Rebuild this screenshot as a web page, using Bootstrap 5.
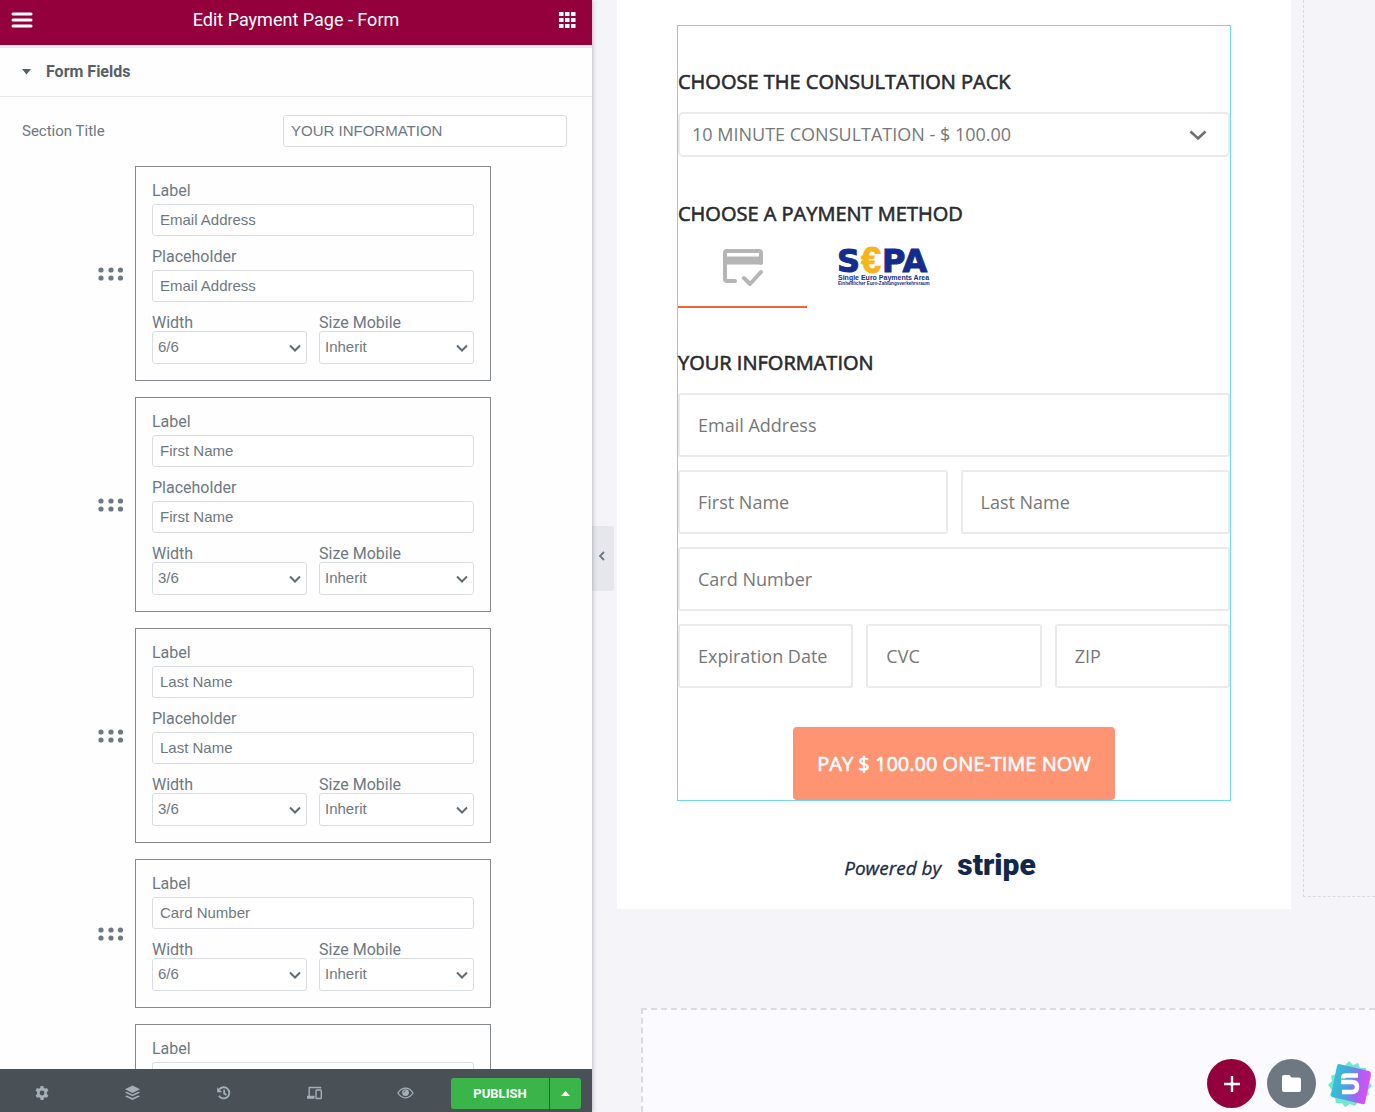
<!DOCTYPE html>
<html lang="en">
<head>
<meta charset="utf-8">
<meta name="viewport" content="width=device-width, initial-scale=1">
<title>Edit Payment Page - Form</title>
<link href="https://cdn.jsdelivr.net/npm/bootstrap@5.3.0/dist/css/bootstrap.min.css" rel="stylesheet">
<style>
  body { font-family: Roboto, "Liberation Sans", sans-serif; background: #f4f4f9; color: #6d7882; }

  /* Editor panel */
  .panel { flex: 0 0 592px; background: #fefefe; box-shadow: 1px 0 4px rgba(60, 60, 80, .3); z-index: 2; }
  .panel-top { height: 48px; background: #93003c; border-bottom: 3px solid #e6e9ec; padding: 0 16px 5px 11px; }
  .panel-top h1 { font-size: 18px; line-height: 24px; font-weight: 400; color: #fff; }
  .icon-btn { border: 0; background: none; padding: 0; line-height: 0; color: inherit; }
  .section-toggle { height: 49px; border: 0; border-bottom: 1px solid #e6e9ec; background: none; padding: 0 22px; gap: 15px; font-size: 16px; font-weight: 700; color: #556068; }
  .panel-body { flex: 1 1 0; min-height: 0; }
  .title-row { padding: 18px 25px 19px 22px; font-size: 15px; }
  .title-row .panel-input { width: 284px; }
  .panel-input, .panel-select {
    font: 15px/20px "Liberation Sans", sans-serif; color: #6d7882; background-color: #fff;
    border: 1px solid #d9dde2; border-radius: 3px;
  }
  .panel-input { height: 32px; padding: 0 7px 1px; }
  .panel-select {
    height: 33px; padding: 0 24px 1px 5px;
    background-image: url("data:image/svg+xml,%3Csvg xmlns='http://www.w3.org/2000/svg' viewBox='0 0 12 12'%3E%3Cpath d='M1 3.500l5 5 5-5' fill='none' stroke='%23606a72' stroke-width='2'/%3E%3C/svg%3E");
    background-position: right 5px center; background-size: 12px 12px;
  }
  .field-list { gap: 16px; padding: 0 101px 0 98px; }
  .field-row { gap: 11px; }
  .grip { flex: 0 0 26px; cursor: move; }
  .field-box { border: 1px solid #85888c; padding: 15px 16px 16px; font-size: 16px; line-height: 18px; }
  .field-box-open { min-height: 216px; }
  .field-box label { display: block; }
  .field-box .panel-input { margin: 4px 0 12px; }
  .half-row { gap: 12px; line-height: 17px; }
  .panel-bottom { height: 43px; background: #495157; color: #a4afb7; padding: 0 11px 0 0; }
  .tool-list { padding: 4px 37px 0 34px; }
  .publish-group { margin-top: 6px; }
  .publish { height: 31px; background: #39b54a; color: #fff; border-radius: 3px; border: 0; font-size: 13px; font-weight: 700; }
  .publish:hover { background: #2f9c3f; color: #fff; }
  .publish-main { width: 98px; padding: 0; }
  .publish-more { width: 31px; padding: 0; margin-left: 1px !important; line-height: 0; }

  /* Page preview */
  .preview { font-family: "Open Sans", "Noto Sans", sans-serif; min-width: 0; }
  .collapse-handle { position: absolute; left: 0; top: 526px; width: 22px; height: 65px; background: #e6e6ec; border: 0; border-radius: 0 3px 3px 0; padding: 0 3px 6px 0; line-height: 0; color: #6d7882; }
  .pay-row { padding-left: 25px; gap: 12px; }
  .pay-card { background: #fff; padding: 25px 60px 24px; }
  .next-col { flex: 0 0 72px; border: 1px dashed #d9d9e2; border-width: 0 0 1px 1px; margin-bottom: 12px; }
  .widget-frame { border: 1px solid #71d7f7; padding-top: 42px; }
  /* Open Sans has no medium cut here: a thin stroke thickens the regular one */
  .medium-text { -webkit-text-stroke: .6px currentColor; }
  .widget-frame h2 { font-size: 20px; line-height: 28px; font-weight: 400; color: #2a2a2e; margin: 0 0 16px; }
  .pack-select {
    height: 45px; border: 2px solid #eaeaed; border-radius: 5px; color: #777; font-size: 18px; padding: 0 48px 0 12px;
    background-image: url("data:image/svg+xml,%3Csvg xmlns='http://www.w3.org/2000/svg' viewBox='0 0 18 18'%3E%3Cpath d='M1.500 5.500l7.500 7 7.500-7' fill='none' stroke='%23707070' stroke-width='2.600'/%3E%3C/svg%3E");
    background-position: right 21px center; background-size: 18px 18px; margin-bottom: 43px;
  }
  .method-heading { margin-bottom: 0 !important; }
  .methods { height: 80px; margin-bottom: 41px; }
  .method { border: 0; background: none; border-bottom: 2px solid transparent; padding: 0 31px; }
  .method-card { width: 129px; border-color: #f0623e; }
  .pay-fields { gap: 13px; }
  .pay-fields > div { gap: 13px; }
  .pay-input { height: 64px; border: 2px solid #eaeaed; border-radius: 3px; font-size: 18px; padding: 0 18px; flex: 1 1 0; min-width: 0; width: 0; }
  .pay-input::placeholder { color: #777; opacity: 1; }
  .pay-btn { height: 73px; margin-top: 39px; padding: 0 24px; border: 0; border-radius: 4px; background: #ff9473; color: #fff; font-size: 20px; font-weight: 400; }
  .pay-btn:hover { background: #ff8560; color: #fff; }
  .powered { margin: 47px 28px 0 0; gap: 16px; height: 37px; color: #1a2b45; font-size: 19px; font-style: italic; }
  .powered span { -webkit-text-stroke: .3px currentColor; }
  .stripe-mark { font: 900 30px/34px Roboto, sans-serif; color: #12284a; text-decoration: none; }
  .drop-zone { margin: 99px 0 0 49px; border: 2px dashed #dadae0; border-width: 2px 0 0 2px; background: #fbfaff; }
  .quick-actions { position: absolute; right: 3px; bottom: 4px; gap: 11px; }
  .round-btn { width: 49px; height: 49px; border: 0; color: #fff; padding: 0; line-height: 0; }
  .round-add { background: #93003c; }
  .round-folder { background: #6d7882; }
</style>
<script src="https://cdn.jsdelivr.net/npm/bootstrap@5.3.0/dist/js/bootstrap.bundle.min.js"></script>
</head>
<body>
<svg class="d-none" aria-hidden="true">
  <symbol id="grip" viewBox="0 0 26 14">
    <g fill="#6d7882"><circle cx="3" cy="3" r="2.600"/><circle cx="13" cy="3" r="2.600"/><circle cx="22.500" cy="3" r="2.600"/><circle cx="3" cy="11" r="2.600"/><circle cx="13" cy="11" r="2.600"/><circle cx="22.500" cy="11" r="2.600"/></g>
  </symbol>
</svg>
<div class="d-flex vh-100 overflow-hidden">

  <aside class="panel d-flex flex-column position-relative">
    <header class="panel-top d-flex align-items-center justify-content-between flex-shrink-0">
      <button class="icon-btn text-white" aria-label="Menu">
        <svg width="22" height="16" viewBox="0 0 22 16" stroke="currentColor" stroke-width="3" stroke-linecap="round"><path d="M2 2h18M2 8h18M2 14h18"/></svg>
      </button>
      <h1 class="m-0">Edit Payment Page - Form</h1>
      <button class="icon-btn text-white" aria-label="Widgets">
        <svg width="17" height="16" viewBox="0 0 17 16" fill="currentColor"><path d="M0 0h4.500v4H0zM6 0h4.500v4H6zM12 0h4.500v4H12zM0 6h4.500v4H0zM6 6h4.500v4H6zM12 6h4.500v4H12zM0 12h4.500v4H0zM6 12h4.500v4H6zM12 12h4.500v4H12z"/></svg>
      </button>
    </header>

    <button class="section-toggle d-flex align-items-center w-100 flex-shrink-0" aria-expanded="true">
      <svg width="9" height="6" viewBox="0 0 9 6" fill="currentColor"><path d="M0 0h9L4.500 5.500z"/></svg>
      Form Fields
    </button>

    <div class="panel-body overflow-hidden">
      <div class="title-row d-flex align-items-center justify-content-between">
        <label for="sectionTitle">Section Title</label>
        <input id="sectionTitle" class="panel-input" type="text" value="YOUR INFORMATION">
      </div>

      <div class="field-list d-flex flex-column">
        <div class="field-row d-flex align-items-center">
          <svg class="grip" height="14"><use href="#grip"/></svg>
          <div class="field-box flex-grow-1">
            <label for="l1">Label</label>
            <input id="l1" class="panel-input w-100" type="text" value="Email Address">
            <label for="p1">Placeholder</label>
            <input id="p1" class="panel-input w-100" type="text" value="Email Address">
            <div class="half-row d-flex">
              <div class="flex-fill w-50"><label for="w1">Width</label><select id="w1" class="form-select panel-select"><option>6/6</option></select></div>
              <div class="flex-fill w-50"><label for="m1">Size Mobile</label><select id="m1" class="form-select panel-select"><option>Inherit</option></select></div>
            </div>
          </div>
        </div>

        <div class="field-row d-flex align-items-center">
          <svg class="grip" height="14"><use href="#grip"/></svg>
          <div class="field-box flex-grow-1">
            <label for="l2">Label</label>
            <input id="l2" class="panel-input w-100" type="text" value="First Name">
            <label for="p2">Placeholder</label>
            <input id="p2" class="panel-input w-100" type="text" value="First Name">
            <div class="half-row d-flex">
              <div class="flex-fill w-50"><label for="w2">Width</label><select id="w2" class="form-select panel-select"><option>3/6</option></select></div>
              <div class="flex-fill w-50"><label for="m2">Size Mobile</label><select id="m2" class="form-select panel-select"><option>Inherit</option></select></div>
            </div>
          </div>
        </div>

        <div class="field-row d-flex align-items-center">
          <svg class="grip" height="14"><use href="#grip"/></svg>
          <div class="field-box flex-grow-1">
            <label for="l3">Label</label>
            <input id="l3" class="panel-input w-100" type="text" value="Last Name">
            <label for="p3">Placeholder</label>
            <input id="p3" class="panel-input w-100" type="text" value="Last Name">
            <div class="half-row d-flex">
              <div class="flex-fill w-50"><label for="w3">Width</label><select id="w3" class="form-select panel-select"><option>3/6</option></select></div>
              <div class="flex-fill w-50"><label for="m3">Size Mobile</label><select id="m3" class="form-select panel-select"><option>Inherit</option></select></div>
            </div>
          </div>
        </div>

        <div class="field-row d-flex align-items-center">
          <svg class="grip" height="14"><use href="#grip"/></svg>
          <div class="field-box flex-grow-1">
            <label for="l4">Label</label>
            <input id="l4" class="panel-input w-100" type="text" value="Card Number">
            <div class="half-row d-flex">
              <div class="flex-fill w-50"><label for="w4">Width</label><select id="w4" class="form-select panel-select"><option>6/6</option></select></div>
              <div class="flex-fill w-50"><label for="m4">Size Mobile</label><select id="m4" class="form-select panel-select"><option>Inherit</option></select></div>
            </div>
          </div>
        </div>

        <div class="field-row d-flex align-items-center">
          <svg class="grip" height="14"><use href="#grip"/></svg>
          <div class="field-box field-box-open flex-grow-1">
            <label for="l5">Label</label>
            <input id="l5" class="panel-input w-100" type="text">
          </div>
        </div>
      </div>
    </div>

    <footer class="panel-bottom d-flex align-items-center flex-shrink-0 position-relative">
      <div class="tool-list d-flex flex-grow-1 justify-content-between">
        <button class="icon-btn" aria-label="Settings">
          <svg width="16" height="16" viewBox="0 0 16 16"><path fill="currentColor" fill-rule="evenodd" d="M6.600 1h2.800l.4 2 1.300.7 1.900-.7 1.400 2.400L12.900 7v2l1.500 1.400L13 12.800l-1.900-.6-1.300.7-.4 2.100H6.600l-.4-2.100-1.300-.7-1.900.6-1.400-2.400L3.100 9V7L1.600 5.400 3 3l1.900.7L6.200 3zM8 5.600a2.400 2.400 0 1 0 0 4.800 2.400 2.400 0 0 0 0-4.800z"/></svg>
        </button>
        <button class="icon-btn" aria-label="Navigator">
          <svg width="17" height="16" viewBox="0 0 17 16" fill="currentColor"><path d="M8.500.6l7.600 3.700-7.600 3.600L.9 4.300z"/><path d="M.9 7.600l1.900-.9 5.700 2.700 5.700-2.700 1.900.9-7.600 3.700z"/><path d="M.9 11.300l1.900-.9 5.700 2.700 5.700-2.700 1.900.9-7.600 3.700z"/></svg>
        </button>
        <button class="icon-btn" aria-label="History">
          <svg width="16" height="16" viewBox="0 0 16 16" fill="none" stroke="currentColor" stroke-width="1.800"><path d="M3.300 4.400a5.600 5.600 0 1 1-.4 6.300M8.200 4.800v3.600l2.300 1.500"/><path d="M1.200 2.200v5h5z" fill="currentColor" stroke="none"/></svg>
        </button>
        <button class="icon-btn" aria-label="Responsive mode">
          <svg width="17" height="16" viewBox="0 0 17 16" fill="none" stroke="currentColor" stroke-width="1.400"><path d="M14.500 3.500V2.500H3.200v8.500M1 11.500h7.500M1 13h7.500"/><rect x="10" y="5" width="5.300" height="8.500" rx=".8"/></svg>
        </button>
        <button class="icon-btn" aria-label="Preview">
          <svg width="17" height="16" viewBox="0 0 17 16"><path d="M1 8c1.900-3.200 4.500-4.800 7.500-4.800S14.100 4.800 16 8c-1.900 3.200-4.500 4.800-7.500 4.800S2.900 11.200 1 8z" fill="none" stroke="currentColor" stroke-width="1.300"/><circle cx="8.500" cy="7.600" r="3.400" fill="currentColor"/><path d="M6.900 7.500a1.700 1.700 0 0 1 1.700-1.700" fill="none" stroke="#495157"/></svg>
        </button>
      </div>
      <div class="publish-group btn-group flex-shrink-0">
        <button class="btn publish publish-main">PUBLISH</button>
        <button class="btn publish publish-more" aria-label="Save options"><svg width="9" height="5" viewBox="0 0 9 5" fill="currentColor"><path d="M0 5h9L4.500 0z"/></svg></button>
      </div>
    </footer>
  </aside>

  <main class="preview flex-grow-1 d-flex flex-column position-relative">
    <div class="pay-row d-flex flex-shrink-0">
      <section class="pay-card flex-grow-1">
        <form class="widget-frame" onsubmit="return false">
          <h2 class="medium-text"><label for="pack">CHOOSE THE CONSULTATION PACK</label></h2>
          <select id="pack" class="form-select pack-select"><option>10 MINUTE CONSULTATION - $ 100.00</option></select>

          <h2 class="medium-text method-heading">CHOOSE A PAYMENT METHOD</h2>
          <div class="methods d-flex">
            <button type="button" class="method method-card" aria-label="Card">
              <svg width="42" height="38" viewBox="0 0 42 38" fill="none" stroke="#b5b5b5" stroke-width="4" stroke-linecap="round" stroke-linejoin="round"><path d="M13 33H5q-2 0-2-2V5q0-2 2-2h32q2 0 2 2v10"/><path d="M4 12.500h35" stroke-width="8" stroke-linecap="butt"/><path d="M22 30l6 6 11-12"/></svg>
            </button>
            <button type="button" class="method" aria-label="SEPA">
              <svg class="overflow-visible" width="90" height="38" viewBox="0 0 90 38" font-family="Liberation Sans, sans-serif" font-weight="700" fill="#142d8c"><text x="-1" y="24" font-size="32" font-family="DejaVu Sans, sans-serif" stroke="#142d8c">S</text><text x="44" y="24" font-size="32" font-family="DejaVu Sans, sans-serif" stroke="#142d8c">PA</text><text x="23" y="25" font-size="36" fill="#f5b51e" stroke="#f5b51e">€</text><text x="0" y="32" font-size="7">Single Euro Payments Area</text><text x="0" y="37" font-size="4.600">Einheitlicher Euro-Zahlungsverkehrsraum</text></svg>
            </button>
          </div>

          <h2 class="medium-text">YOUR INFORMATION</h2>
          <div class="pay-fields d-flex flex-column">
            <div class="d-flex"><input class="form-control pay-input" type="email" placeholder="Email Address" aria-label="Email Address"></div>
            <div class="d-flex">
              <input class="form-control pay-input" type="text" placeholder="First Name" aria-label="First Name">
              <input class="form-control pay-input" type="text" placeholder="Last Name" aria-label="Last Name">
            </div>
            <div class="d-flex"><input class="form-control pay-input" type="text" placeholder="Card Number" aria-label="Card Number"></div>
            <div class="d-flex">
              <input class="form-control pay-input" type="text" placeholder="Expiration Date" aria-label="Expiration Date">
              <input class="form-control pay-input" type="text" placeholder="CVC" aria-label="CVC">
              <input class="form-control pay-input" type="text" placeholder="ZIP" aria-label="ZIP">
            </div>
          </div>
          <div class="d-flex justify-content-center">
            <button type="submit" class="btn pay-btn medium-text">PAY $ 100.00 ONE-TIME NOW</button>
          </div>
        </form>
        <div class="powered d-flex align-items-baseline justify-content-center">
          <span>Powered by</span><a href="#" class="stripe-mark fst-normal">stripe</a>
        </div>
      </section>
      <div class="next-col"></div>
    </div>

    <div class="drop-zone flex-grow-1"></div>

    <button class="collapse-handle" aria-label="Hide panel">
      <svg width="7" height="10" viewBox="0 0 7 10" fill="none" stroke="currentColor" stroke-width="1.800"><path d="M6 1L2 5l4 4"/></svg>
    </button>

    <div class="quick-actions d-flex align-items-center">
      <button class="round-btn round-add rounded-circle" aria-label="Add section">
        <svg width="16" height="16" viewBox="0 0 16 16" stroke="currentColor" stroke-width="2.400"><path d="M8 0v16M0 8h16"/></svg>
      </button>
      <button class="round-btn round-folder rounded-circle" aria-label="Templates">
        <svg width="19" height="17" viewBox="0 0 19 17" fill="currentColor"><path d="M2 0h5.500l2 2.500H17q2 0 2 2V15q0 2-2 2H2q-2 0-2-2V2q0-2 2-2z"/></svg>
      </button>
      <button class="icon-btn" aria-label="Starter templates">
        <svg width="45" height="48" viewBox="0 0 45 48">
          <defs><linearGradient id="sg" x1="0" y1="0" x2="1" y2=".2"><stop offset="0" stop-color="#26d3cf"/><stop offset=".5" stop-color="#4f9fe0"/><stop offset=".75" stop-color="#a463f2"/><stop offset="1" stop-color="#e04df5"/></linearGradient></defs>
          <path fill="#6fe8d0" d="M22 1l4 4 5-2 2 5 6 0 0 6 5 3-2 5 3 4-4 4 1 5-5 2-1 5-5 0-3 4-5-2-5 3-3-4-6 0-1-5-5-3 2-5-4-5 4-4-1-5 5-2 1-6 6 0z"/>
          <path fill="url(#sg)" d="M12 4l30 7q2 1 2 3l-6 29q-1 2-3 1L5 37q-2-1-1-3L10 6q0-2 2-2z"/>
          <path fill="none" stroke="#fff" stroke-width="4.500" d="M31 15.500H19q-3 0-3 3M14 22h11q5 0 5 5t-5 5H15"/>
        </svg>
      </button>
    </div>
  </main>
</div>
</body>
</html>
